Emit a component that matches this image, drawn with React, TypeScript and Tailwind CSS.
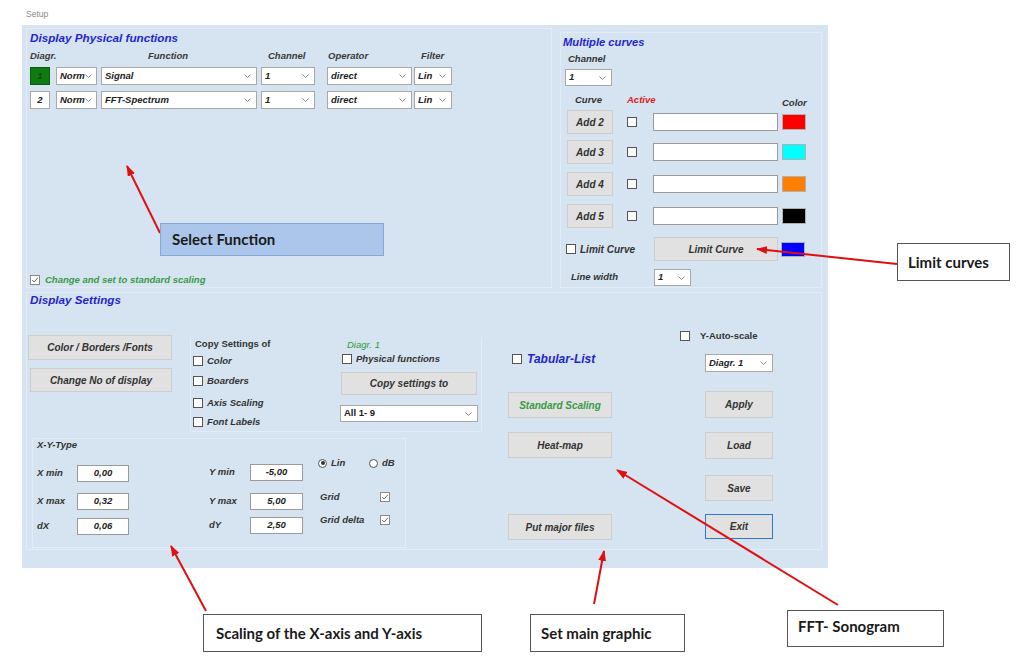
import React from "react";

const Chev = () => (
  <svg width="7" height="4" viewBox="0 0 7 4" className="shrink-0">
    <path d="M0.5 0.5L3.5 3.5L6.5 0.5" stroke="#8c8c8c" fill="none" strokeWidth="1" />
  </svg>
);

function Sel({ text, className = "", plain = false }: { text: string; className?: string; plain?: boolean }) {
  return (
    <div
      className={`flex items-center justify-between bg-white border border-[#a8a8a8] pl-[3px] pr-[5px] text-[9.5px] font-bold text-[#222] ${plain ? "" : "italic"} ${className}`}
    >
      <span className="whitespace-nowrap">{text}</span>
      <Chev />
    </div>
  );
}

function Cb({ checked = false, className = "" }: { checked?: boolean; className?: string }) {
  return (
    <span
      className={`inline-flex items-center justify-center w-[10px] h-[10px] border bg-white shrink-0 ${checked ? "border-[#8a8a8a]" : "border-[#555]"} ${className}`}
    >
      {checked && (
        <svg width="8" height="8" viewBox="0 0 8 8">
          <path d="M1.2 4L3.2 6L6.8 1.8" stroke="#666" fill="none" strokeWidth="1" />
        </svg>
      )}
    </span>
  );
}

function Btn({
  children,
  className = "",
  color = "text-[#333]",
  border = "border-[#cdcdcd]",
}: {
  children: React.ReactNode;
  className?: string;
  color?: string;
  border?: string;
}) {
  return (
    <div
      className={`flex items-center justify-center bg-[#e1e1e1] border text-[10px] font-bold italic whitespace-nowrap ${color} ${border} ${className}`}
    >
      {children}
    </div>
  );
}

function Inp({ text, className = "" }: { text: string; className?: string }) {
  return (
    <div
      className={`flex items-center justify-center bg-white border border-[#9a9a9a] text-[9.5px] font-bold italic text-[#222] ${className}`}
    >
      {text}
    </div>
  );
}

function Radio({ checked = false }: { checked?: boolean }) {
  return (
    <span className="inline-flex items-center justify-center w-[9px] h-[9px] rounded-full border border-[#555] bg-white shrink-0">
      {checked && <span className="w-[4px] h-[4px] rounded-full bg-[#333]" />}
    </span>
  );
}

const lbl = "text-[9.5px] font-bold italic text-[#333] whitespace-nowrap";
const callout =
  "absolute bg-white border border-[#555] flex items-center font-['Lato',sans-serif] text-[15px] font-bold text-[#1a1a1a] whitespace-nowrap";

export default function App() {
  return (
    <div className="relative w-[1024px] h-[659px] bg-white overflow-hidden font-['Liberation_Sans',Arial,sans-serif]">
      <div className="h-[25px] pl-[26px] pt-[9px] text-[8.5px] leading-[10px] text-[#8a8a8a]">Setup</div>

      {/* Form panel */}
      <div className="ml-[22px] w-[806px] h-[543px] bg-[#d6e4f1] pl-[4px] pt-[3px]">
        <div className="flex items-start">
          {/* Display Physical functions */}
          <div className="w-[526px] h-[260px] border border-[#e3ecf6] pl-[3px] pt-[1px] flex flex-col">
            <div className="h-[16px] leading-[16px] text-[11.7px] font-bold italic text-[#2424cc] whitespace-nowrap">
              Display Physical functions
            </div>
            <div className="mt-[4px] h-[12px] leading-[12px] flex text-[9.5px] font-bold italic text-[#3a3a3a]">
              <div className="w-[118px]">Diagr.</div>
              <div className="w-[120px]">Function</div>
              <div className="w-[60px]">Channel</div>
              <div className="w-[93px]">Operator</div>
              <div>Filter</div>
            </div>
            <div className="mt-[5px] flex h-[18px]">
              <div className="w-[20px] h-[18px] bg-[#0d7a12] border border-[#0a5c0e] flex items-center justify-center text-[9.5px] font-bold italic text-[#0a4e0c]">
                1
              </div>
              <Sel className="ml-[6px] w-[41px] h-[18px]" text="Norm" />
              <Sel className="ml-[4px] w-[156px] h-[18px]" text="Signal" />
              <Sel className="ml-[4px] w-[54px] h-[18px]" text="1" />
              <Sel className="ml-[12px] w-[85px] h-[18px]" text="direct" />
              <Sel className="ml-[2px] w-[38px] h-[18px]" text="Lin" />
            </div>
            <div className="mt-[6px] flex h-[18px]">
              <div className="w-[20px] h-[18px] bg-white border border-[#a8a8a8] flex items-center justify-center text-[9.5px] font-bold italic text-[#222]">
                2
              </div>
              <Sel className="ml-[6px] w-[41px] h-[18px]" text="Norm" />
              <Sel className="ml-[4px] w-[156px] h-[18px]" text="FFT-Spectrum" />
              <Sel className="ml-[4px] w-[54px] h-[18px]" text="1" />
              <Sel className="ml-[12px] w-[85px] h-[18px]" text="direct" />
              <Sel className="ml-[2px] w-[38px] h-[18px]" text="Lin" />
            </div>
            <div className="mt-auto mb-[1px] h-[12px] flex items-center">
              <Cb checked />
              <span className="ml-[5px] text-[9.5px] italic font-bold text-[#3a9a46] whitespace-nowrap">
                Change and set to standard scaling
              </span>
            </div>
          </div>

          {/* Multiple curves */}
          <div className="ml-[8px] mt-[4px] w-[262px] h-[256px] border border-[#e3ecf6] pl-[2px] pt-[2px] flex flex-col">
            <div className="h-[14px] leading-[14px] text-[11.2px] font-bold italic text-[#2424cc]">Multiple curves</div>
            <div className={`ml-[5px] mt-[4px] h-[12px] leading-[12px] ${lbl}`}>Channel</div>
            <Sel className="ml-[2px] mt-[4px] w-[47px] h-[17px]" text="1" />
            <div className="mt-[7px] h-[14px] flex">
              <div className={`w-[64px] pl-[12px] leading-[14px] ${lbl}`}>Curve</div>
              <div className="w-[155px] leading-[14px] text-[9.5px] font-bold italic text-[#e02020]">Active</div>
              <div className={`pt-[3px] leading-[14px] ${lbl}`}>Color</div>
            </div>
            {[
              { n: "Add 2", c: "bg-[#ff0000]", mt: "mt-[3px]" },
              { n: "Add 3", c: "bg-[#00ffff]", mt: "mt-[6px]" },
              { n: "Add 4", c: "bg-[#ff8000]", mt: "mt-[8px]" },
              { n: "Add 5", c: "bg-[#000000]", mt: "mt-[8px]" },
            ].map((r) => (
              <div key={r.n} className={`${r.mt} h-[24px] flex items-center`}>
                <Btn className="ml-[4px] w-[46px] h-[24px]">{r.n}</Btn>
                <Cb className="ml-[14px]" />
                <div className="ml-[16px] w-[125px] h-[18px] bg-white border border-[#9a9a9a]" />
                <div className={`ml-[4px] w-[24px] h-[16px] border border-[#b0b0b0] ${r.c}`} />
              </div>
            ))}
            <div className="mt-[9px] h-[24px] flex items-center">
              <div className="w-[91px] flex items-center">
                <Cb className="ml-[3px]" />
                <span className="ml-[4px] text-[10px] italic font-bold text-[#333]">Limit Curve</span>
              </div>
              <Btn className="w-[124px] h-[24px]">Limit Curve</Btn>
              <div className="ml-[3px] w-[24px] h-[15px] bg-[#0000ff] border border-[#b0b0b0]" />
            </div>
            <div className="mt-[8px] h-[17px] flex items-center">
              <div className={`w-[91px] pl-[8px] ${lbl}`}>Line width</div>
              <Sel className="w-[37px] h-[17px]" text="1" />
            </div>
          </div>
        </div>

        {/* Display Settings */}
        <div className="mt-[4px] w-[796px] h-[258px] border border-[#e3ecf6] flex flex-col">
          <div className="pl-[3px] h-[14px] leading-[14px] text-[11.7px] font-bold italic text-[#2424cc]">
            Display Settings
          </div>
          <div className="flex items-start">
            {/* Left part */}
            <div className="w-[455px] flex flex-col">
              <div className="flex items-start">
                <div className="ml-[1px] flex flex-col">
                  <Btn className="mt-[28px] w-[144px] h-[25px]">Color / Borders /Fonts</Btn>
                  <Btn className="mt-[8px] ml-[2px] w-[142px] h-[24px]">Change No of display</Btn>
                </div>
                <div className="ml-[18px] mt-[31px] w-[292px] h-[94px] border border-t-0 border-[#e3ecf6] flex">
                  <div className="w-[149px] pl-[2px] flex flex-col">
                    <div className="ml-[2px] h-[12px] leading-[12px] text-[9.5px] font-bold text-[#333]">Copy Settings of</div>
                    {[
                      { t: "Color", mt: "mt-[5px]" },
                      { t: "Boarders", mt: "mt-[8px]" },
                      { t: "Axis Scaling", mt: "mt-[10px]" },
                      { t: "Font Labels", mt: "mt-[7px]" },
                    ].map((c) => (
                      <div key={c.t} className={`${c.mt} h-[12px] flex items-center`}>
                        <Cb />
                        <span className={`ml-[4px] ${lbl}`}>{c.t}</span>
                      </div>
                    ))}
                  </div>
                  <div className="flex flex-col">
                    <div className="pl-[7px] mt-[1px] h-[12px] leading-[12px] text-[9.5px] italic text-[#2e9a38]">Diagr. 1</div>
                    <div className="mt-[2px] pl-[2px] h-[12px] flex items-center">
                      <Cb />
                      <span className={`ml-[4px] ${lbl}`}>Physical functions</span>
                    </div>
                    <Btn className="mt-[7px] ml-[1px] w-[136px] h-[23px]">Copy settings to</Btn>
                    <Sel className="mt-[10px] w-[138px] h-[17px]" text="All 1- 9" plain />
                  </div>
                </div>
              </div>
              {/* X-Y-Type */}
              <div className="ml-[5px] mt-[6px] w-[374px] h-[110px] border border-[#e3ecf6] flex flex-col">
                <div className={`pl-[4px] h-[12px] leading-[12px] ${lbl}`}>X-Y-Type</div>
                <div className="flex items-start">
                  <div className="pl-[4px] flex flex-col">
                    {[
                      { l: "X min", v: "0,00", mt: "mt-[14px]" },
                      { l: "X max", v: "0,32", mt: "mt-[11px]" },
                      { l: "dX", v: "0,06", mt: "mt-[8px]" },
                    ].map((r) => (
                      <div key={r.l} className={`${r.mt} h-[17px] flex items-center`}>
                        <div className={`w-[40px] ${lbl}`}>{r.l}</div>
                        <Inp className="w-[52px] h-[17px]" text={r.v} />
                      </div>
                    ))}
                  </div>
                  <div className="ml-[80px] flex flex-col">
                    {[
                      { l: "Y min", v: "-5,00", mt: "mt-[13px]" },
                      { l: "Y max", v: "5,00", mt: "mt-[12px]" },
                      { l: "dY", v: "2,50", mt: "mt-[7px]" },
                    ].map((r) => (
                      <div key={r.l} className={`${r.mt} h-[17px] flex items-center`}>
                        <div className={`w-[41px] ${lbl}`}>{r.l}</div>
                        <Inp className="w-[53px] h-[17px]" text={r.v} />
                      </div>
                    ))}
                  </div>
                  <div className="ml-[15px] flex flex-col">
                    <div className="mt-[6px] h-[12px] flex items-center">
                      <Radio checked />
                      <span className={`ml-[4px] w-[38px] ${lbl}`}>Lin</span>
                      <Radio />
                      <span className={`ml-[4px] ${lbl}`}>dB</span>
                    </div>
                    <div className="mt-[22px] h-[12px] flex items-center">
                      <span className={`pl-[2px] w-[62px] ${lbl}`}>Grid</span>
                      <Cb checked />
                    </div>
                    <div className="mt-[11px] h-[12px] flex items-center">
                      <span className={`pl-[2px] w-[62px] ${lbl}`}>Grid delta</span>
                      <Cb checked />
                    </div>
                  </div>
                </div>
              </div>
            </div>

            {/* Col C */}
            <div className="ml-[26px] w-[104px] flex flex-col">
              <div className="mt-[46px] h-[12px] pl-[4px] flex items-center">
                <Cb />
                <span className="ml-[5px] text-[12px] font-bold italic text-[#2424cc] whitespace-nowrap">Tabular-List</span>
              </div>
              <Btn className="mt-[27px] w-[104px] h-[26px]" color="text-[#3a9a46]">
                Standard Scaling
              </Btn>
              <Btn className="mt-[14px] w-[104px] h-[26px]">Heat-map</Btn>
              <Btn className="mt-[56px] w-[104px] h-[26px]">Put major files</Btn>
            </div>

            {/* Col D */}
            <div className="ml-[68px] w-[93px] flex flex-col">
              <div className="mt-[23px] h-[12px] flex items-center">
                <Cb />
                <span className="ml-[10px] text-[9.5px] font-bold text-[#333] whitespace-nowrap">Y-Auto-scale</span>
              </div>
              <Sel className="ml-[25px] mt-[12px] w-[68px] h-[18px]" text="Diagr. 1" />
              <Btn className="ml-[25px] mt-[19px] w-[68px] h-[27px]">Apply</Btn>
              <Btn className="ml-[25px] mt-[14px] w-[68px] h-[27px]">Load</Btn>
              <Btn className="ml-[25px] mt-[16px] w-[68px] h-[26px]">Save</Btn>
              <Btn className="ml-[25px] mt-[13px] w-[68px] h-[25px]" border="border-[#2f78d2]">
                Exit
              </Btn>
            </div>
          </div>
        </div>
      </div>

      {/* Annotation arrows */}
      <svg className="absolute left-0 top-0 pointer-events-none" width="1024" height="659" viewBox="0 0 1024 659">
        <defs>
          <marker id="ah" markerWidth="11" markerHeight="8" refX="10" refY="4" orient="auto" markerUnits="userSpaceOnUse">
            <path d="M0,0 L11,4 L0,8 z" fill="#e01010" />
          </marker>
        </defs>
        <g stroke="#e01010" strokeWidth="2" fill="none">
          <line x1="160" y1="233" x2="127" y2="166" markerEnd="url(#ah)" />
          <line x1="897" y1="264" x2="757" y2="249" markerEnd="url(#ah)" />
          <line x1="206" y1="611" x2="171" y2="546" markerEnd="url(#ah)" />
          <line x1="594" y1="604" x2="604" y2="551" markerEnd="url(#ah)" />
          <line x1="838" y1="605" x2="617" y2="470" markerEnd="url(#ah)" />
        </g>
      </svg>

      {/* Callouts */}
      <div className="absolute left-[160px] top-[223px] w-[224px] h-[33px] bg-[#abc6ea] border border-[#86a6d4] flex items-center pl-[11px] font-['Lato',sans-serif] text-[15px] font-bold text-[#1a1a1a]">
        Select Function
      </div>
      <div className={`${callout} left-[897px] top-[243px] w-[113px] h-[38px] pl-[10px]`}>Limit curves</div>
      <div className={`${callout} left-[203px] top-[614px] w-[279px] h-[38px] pl-[12px]`}>
        Scaling of the X-axis and Y-axis
      </div>
      <div className={`${callout} left-[530px] top-[614px] w-[155px] h-[38px] pl-[10px]`}>Set main graphic</div>
      <div className={`${callout} left-[787px] top-[610px] w-[157px] h-[37px] pl-[10px] pb-[4px]`}>FFT- Sonogram</div>
    </div>
  );
}
